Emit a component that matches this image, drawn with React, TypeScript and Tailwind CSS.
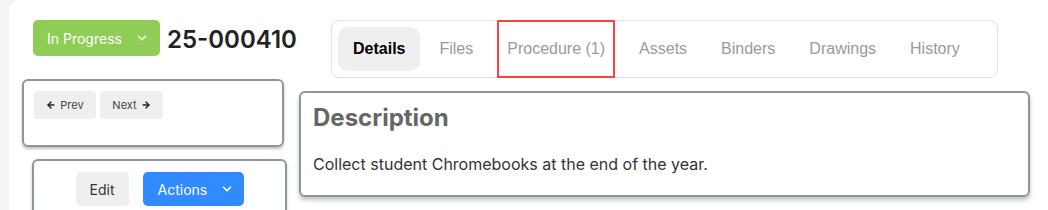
import React from 'react';
import { ChevronDown, ArrowLeft, ArrowRight } from 'lucide-react';

const tabs = ['Details', 'Files', 'Procedure (1)', 'Assets', 'Binders', 'Drawings', 'History'];

const App: React.FC = () => {
  return (
    <div className="w-[1048px] h-[210px] overflow-hidden bg-[#f3f4f6] pl-[9px] font-['Inter',sans-serif]">
      <div className="h-full bg-white rounded-tl-[12px] flex">
        {/* left column */}
        <div className="w-[280px] shrink-0 flex flex-col pl-[13px] pt-[20px]">
          <div className="shrink-0 flex items-center ml-[11px] whitespace-nowrap">
            <button className="shrink-0 h-[36px] w-[127px] bg-[#8fcd56] rounded-[5px] text-white text-[14px] flex items-center pl-[14px] gap-[13px]">
              In Progress
              <ChevronDown size={14} strokeWidth={3} className="text-white/80" />
            </button>
            <span className="ml-[7px] text-[24px] font-semibold text-[#222] leading-none mt-[3px]">25-000410</span>
          </div>

          <div className="shrink-0 mt-[23px] w-[262px] h-[68px] border-2 border-[#8d959e] rounded-[6px] shadow-[0_2px_3px_rgba(0,0,0,0.25)] px-[10px] pt-[10px] flex items-start gap-[4px]">
            <button className="h-[28px] w-[62px] bg-[#efefef] rounded-[4px] text-[11px] text-[#444] flex items-center justify-center gap-[4px]">
              <ArrowLeft size={10} strokeWidth={3.5} className="text-[#222]" />
              Prev
            </button>
            <button className="h-[28px] w-[63px] bg-[#efefef] rounded-[4px] text-[11px] text-[#444] flex items-center justify-center gap-[4px]">
              Next
              <ArrowRight size={10} strokeWidth={3.5} className="text-[#222]" />
            </button>
          </div>

          <div className="shrink-0 mt-[12px] ml-[10px] w-[255px] h-[80px] border-2 border-[#8d959e] rounded-[6px] shadow-[0_2px_3px_rgba(0,0,0,0.25)] pt-[11px] flex items-start justify-center gap-[14px]">
            <button className="h-[34px] w-[53px] bg-[#efefef] rounded-[5px] text-[14px] text-[#333]">Edit</button>
            <button className="h-[34px] w-[101px] bg-[#2f8bff] rounded-[5px] text-[14px] text-white flex items-center pl-[15px] gap-[13px]">
              Actions
              <ChevronDown size={14} strokeWidth={3} />
            </button>
          </div>
        </div>

        {/* right column */}
        <div className="flex flex-col pl-[10px] pt-[20px]">
          <div className="shrink-0 ml-[32px] w-[667px] h-[58px] border border-[#e2e2e2] rounded-[8px] p-[6px] flex items-stretch gap-[4px] font-['Liberation_Sans',sans-serif] text-[16px] whitespace-nowrap">
            {tabs.map((t) =>
              t === 'Details' ? (
                <div key={t} className="px-[15px] bg-[#efefef] rounded-[10px] flex items-center font-bold text-black">
                  {t}
                </div>
              ) : t === 'Procedure (1)' ? (
                <div key={t} className="mx-[5px] -my-[7px] px-[8px] border-2 border-[#f44444] flex items-center text-[#9a9a9a]">
                  {t}
                </div>
              ) : (
                <div key={t} className="px-[15px] flex items-center text-[#9a9a9a]">
                  {t}
                </div>
              )
            )}
          </div>

          <div className="shrink-0 mt-[13px] w-[731px] h-[106px] border-2 border-[#8d959e] rounded-[6px] shadow-[0_3px_4px_rgba(0,0,0,0.25)] px-[12px] pt-[10px]">
            <h2 className="text-[24px] font-bold text-[#666] leading-[30px]">Description</h2>
            <p className="mt-[19px] text-[16px] text-[#333]">Collect student Chromebooks at the end of the year.</p>
          </div>
        </div>
      </div>
    </div>
  );
};

export default App;
